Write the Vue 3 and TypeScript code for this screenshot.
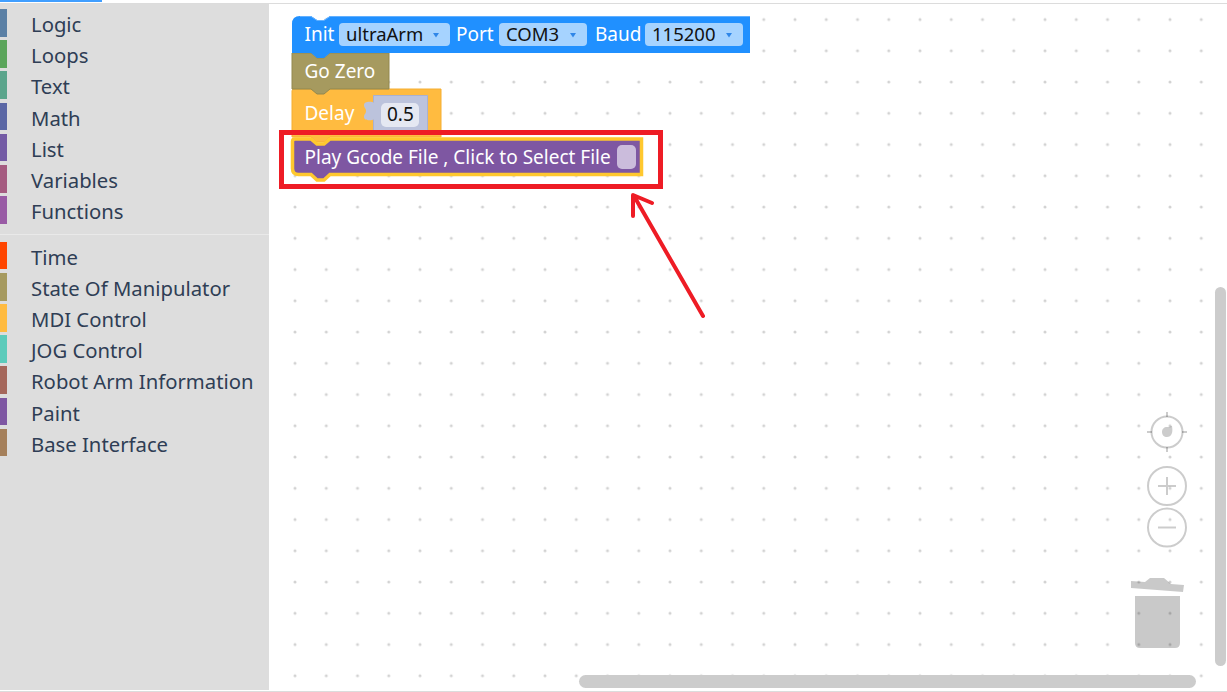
<template>
  <div class="page">
    <div class="top-bar"><div class="progress"></div></div>
    <div class="main">
      <aside class="toolbox">
        <div class="group">
          <div v-for="cat in baseCategories" :key="cat.name" class="category">
            <span class="stripe" :style="{ background: cat.color }"></span>
            <span class="label">{{ cat.name }}</span>
          </div>
        </div>
        <div class="separator"></div>
        <div class="group">
          <div v-for="cat in robotCategories" :key="cat.name" class="category">
            <span class="stripe" :style="{ background: cat.color }"></span>
            <span class="label">{{ cat.name }}</span>
          </div>
        </div>
      </aside>
      <div class="workspace">
        <!-- viewBox uses page coordinates so blocks can sit where they sit in the editor -->
        <svg class="canvas" viewBox="269 4 958 686" width="958" height="686">
          <defs>
            <pattern id="grid" patternUnits="userSpaceOnUse" width="31.25" height="31.25" x="279.4" y="3.9">
              <circle cx="15.625" cy="15.625" r="1.5" fill="#d2d2d2" />
            </pattern>
          </defs>
          <rect x="269" y="4" width="958" height="686" fill="url(#grid)" />

          <!-- delay -->
          <path d="M292,91 q0,-2 2,-2 H441 V137 H330 l-6,5 h-7 l-6,-5 H292 Z" fill="#ffbb40" stroke="#f5ae30" stroke-width="1" />
          <rect x="373.500" y="95.500" width="54" height="36" fill="#bcc3dc" stroke="#a9b1cf" stroke-width="1" />
          <path d="M374.500,103 c-3,-2 -10.500,-2 -10.500,2 c0,3 2,3 2,6 c0,3 -2,3 -2,6 c0,4 7.500,4 10.500,2 Z" fill="#bcc3dc" />
          <rect x="381" y="103" width="38" height="24" rx="5" fill="#e5e8f2" />
          <text class="t dark" x="387" y="121">0.5</text>
          <text class="t" x="304.500" y="120">Delay</text>

          <!-- go zero -->
          <path d="M292,53 H311 l6,5 h7 l6,-5 H389 V89 H330 l-6,5 h-7 l-6,-5 H292 Z" fill="#a69a5f" stroke="#93884f" stroke-width="1" />
          <text class="t" x="304.500" y="78">Go Zero</text>

          <!-- init -->
          <path d="M292,24 q0,-8 8,-8 H311 l6,4 h7 l6,-4 H750 V53 H330 l-6,5 h-7 l-6,-5 H292 Z" fill="#2090ff" />
          <path d="M300,16.500 H311 l6,4 h7 l6,-4 H750" fill="none" stroke="#62b0ff" stroke-width="1" />
          <text class="t" x="304.500" y="41">Init</text>
          <text class="t" x="456" y="41">Port</text>
          <text class="t" x="595" y="41">Baud</text>
          <g v-for="f in dropdowns" :key="f.text">
            <rect :x="f.x" y="23" :width="f.w" height="23" rx="4" fill="#a6d3ff" />
            <text class="t dark field" :x="f.x + 7" y="41">{{ f.text }}</text>
            <path :d="`M${f.x + f.w - 17},33 h6 l-3,4.500 Z`" fill="#2f86e8" />
          </g>

          <!-- selected gcode block -->
          <path d="M295,139 H311 l6,5 h7 l6,-5 H641.500 V174.500 H330 l-6,5.500 h-7 l-6,-5.500 H298.500 q-6,0 -6,-6 V141.500 q0,-2.500 2.500,-2.500 Z" fill="#7e57a2" stroke="#ffc82e" stroke-width="3.500" />
          <text class="t" x="304.500" y="164">Play Gcode File , Click to Select File</text>
          <rect x="617" y="145" width="19" height="24" rx="5" fill="#cbbcdc" />

          <!-- annotation -->
          <rect x="281.500" y="132.500" width="379" height="54" fill="none" stroke="#ee1c25" stroke-width="5" />
          <path d="M703,316 L634,196 M633,216 L633,195 L652,203" fill="none" stroke="#ee1c25" stroke-width="4" stroke-linecap="round" stroke-linejoin="round" />

          <!-- controls -->
          <g fill="none" stroke="#000" stroke-opacity="0.2" stroke-width="2">
            <circle cx="1167" cy="432" r="15.500" />
            <path d="M1167,412 v5 M1167,447 v5 M1147,432 h5 M1182,432 h5" />
            <circle cx="1167" cy="486" r="19" />
            <path d="M1158,486 h18 M1167,477 v18" />
            <circle cx="1167" cy="527.500" r="19" />
            <path d="M1158,527.500 h18" />
          </g>
          <path d="M1172,426 c0.500,3 0.500,5 0,7 c-1,3 -3,4 -5,4 c-3,0 -5,-2 -5,-5 c0,-3 2,-5 5,-5 c2,0 3,-0.500 5,-1 Z" fill="#000" fill-opacity="0.2" />
          <path d="M1131,581 L1145,582 L1150,578 L1164,578 L1171,584 L1184,585 L1183,592 L1131,588 Z" fill="#000" fill-opacity="0.21" />
          <path d="M1135,596 H1180 V643 q0,5 -5,5 H1140 q-5,0 -5,-5 Z" fill="#000" fill-opacity="0.21" />
        </svg>
        <div class="scroll-v"></div>
        <div class="scroll-h"></div>
      </div>
    </div>
    <div class="bottom-line"></div>
  </div>
</template>

<script setup lang="ts">
interface Category {
  name: string;
  color: string;
}

const baseCategories: Category[] = [
  { name: 'Logic', color: '#5b80a5' },
  { name: 'Loops', color: '#5ba55b' },
  { name: 'Text', color: '#5ba58c' },
  { name: 'Math', color: '#5b67a5' },
  { name: 'List', color: '#745ba5' },
  { name: 'Variables', color: '#a55b80' },
  { name: 'Functions', color: '#995ba5' },
];

const robotCategories: Category[] = [
  { name: 'Time', color: '#ff4500' },
  { name: 'State Of Manipulator', color: '#a69a5f' },
  { name: 'MDI Control', color: '#ffbb40' },
  { name: 'JOG Control', color: '#5ccbbb' },
  { name: 'Robot Arm Information', color: '#a5675b' },
  { name: 'Paint', color: '#7e57a2' },
  { name: 'Base Interface', color: '#a5805b' },
];

const dropdowns = [
  { text: 'ultraArm', x: 339, w: 111 },
  { text: 'COM3', x: 499, w: 88 },
  { text: '115200', x: 645, w: 98 },
];
</script>

<style scoped>
.page {
  width: 1227px;
  height: 692px;
  display: flex;
  flex-direction: column;
  background: #fff;
  font-family: "Noto Sans", "Open Sans", sans-serif;
  overflow: hidden;
}

.top-bar {
  height: 4px;
  box-sizing: border-box;
  border-bottom: 1px solid #dcdcdc;
}

.progress {
  width: 102px;
  height: 2px;
  background: #409eff;
}

.main {
  flex: 1;
  display: flex;
  min-height: 0;
}

.toolbox {
  width: 269px;
  flex-shrink: 0;
  background: #ddd;
  padding-top: 5px;
  box-sizing: border-box;
}

.category {
  display: flex;
  align-items: center;
  height: 27.6px;
  margin-bottom: 3.6px;
}

.stripe {
  width: 7px;
  height: 100%;
  flex-shrink: 0;
}

.label {
  margin-left: 24px;
  padding-top: 4px;
  font-size: 20.3px;
  line-height: 27.6px;
  color: #2f3e55;
  white-space: nowrap;
}

.separator {
  height: 1px;
  margin: 10px 0 7px;
  background: #e9e9e9;
}

.workspace {
  flex: 1;
  position: relative;
  overflow: hidden;
}

.canvas {
  display: block;
}

.t {
  font-family: "Noto Sans", "Open Sans", sans-serif;
  font-size: 19px;
  fill: #fff;
}

.t.dark {
  fill: #111;
}

.t.field {
  font-size: 18.5px;
}

.scroll-v {
  position: absolute;
  right: 1px;
  top: 283px;
  width: 11px;
  height: 379px;
  border-radius: 6px;
  background: #ccc;
}

.scroll-h {
  position: absolute;
  left: 310px;
  top: 671px;
  width: 617px;
  height: 13px;
  border-radius: 7px;
  background: #ccc;
}

.bottom-line {
  height: 2px;
  box-sizing: border-box;
  border-bottom: 1px solid #dcdcdc;
  background: #fff;
}
</style>
